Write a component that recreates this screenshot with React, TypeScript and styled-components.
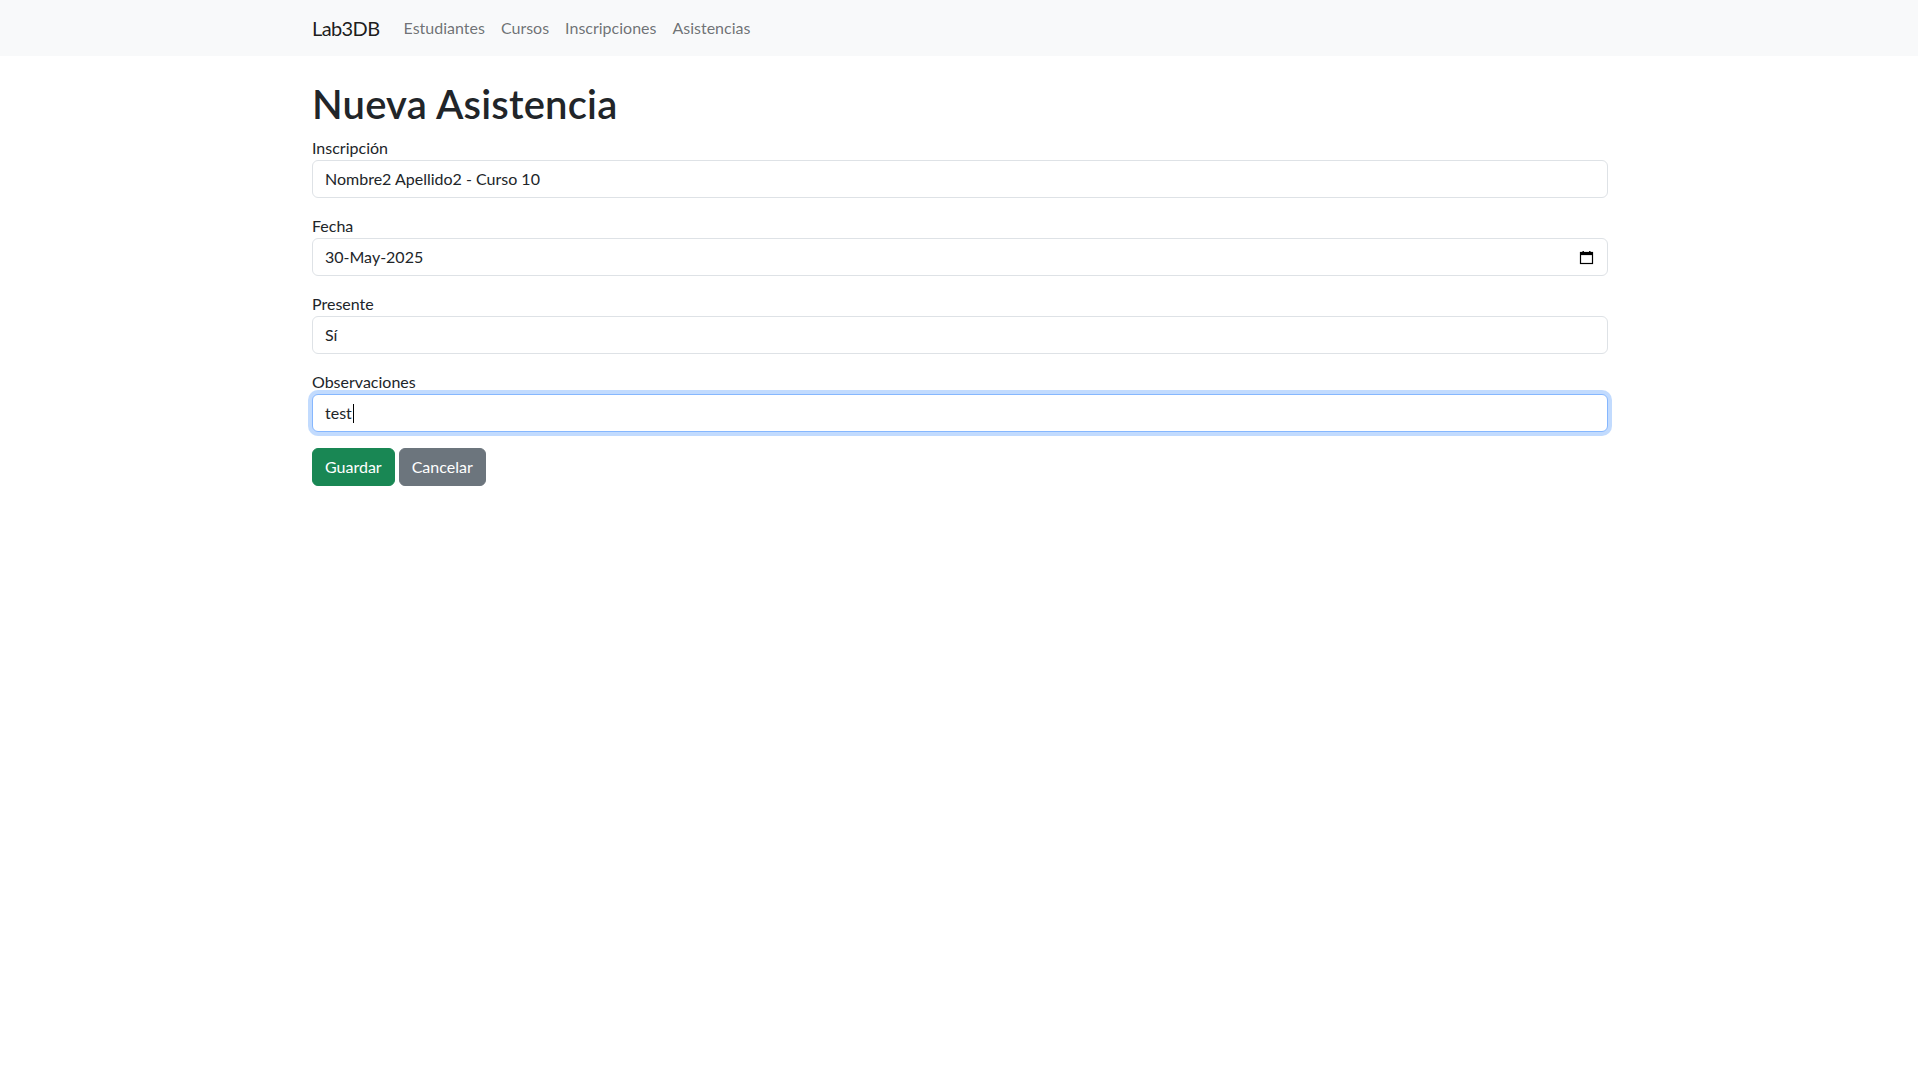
import React from 'react';
import styled, { createGlobalStyle } from 'styled-components';

const FONT = `"Segoe UI", Lato, "Liberation Sans", sans-serif`;

const GlobalStyle = createGlobalStyle`
  *, *::before, *::after { box-sizing: border-box; }
  body {
    margin: 0;
    font-family: ${FONT};
    font-size: 16px;
    line-height: 1.5;
    color: #212529;
    background: #fff;
  }
`;

const Navbar = styled.nav`
  background: #f8f9fa;
  padding: 8px 0;
`;

const Container = styled.div`
  max-width: 1320px;
  margin: 0 auto;
  padding: 0 11px 0 13px;
`;

const NavInner = styled(Container)`
  display: flex;
  align-items: center;
`;

const Brand = styled.a`
  font-size: 20px;
  line-height: 30px;
  padding: 5px 0;
  margin-right: 16px;
  letter-spacing: -0.6px;
  color: rgba(0, 0, 0, 0.9);
  text-decoration: none;
`;

const NavList = styled.div`
  display: flex;
`;

const NavLink = styled.a`
  padding: 8px;
  color: rgba(33, 37, 41, 0.65);
  text-decoration: none;
`;

const Title = styled.h1`
  margin: 24px 0 8px;
  font-size: 40px;
  font-weight: 600;
  line-height: 1.2;
  letter-spacing: 0.2px;
`;

const Group = styled.div`
  margin-bottom: 16px;
`;

const Label = styled.label`
  display: block;
`;

const Field = styled.div<{ $focused?: boolean }>`
  display: flex;
  align-items: center;
  width: 100%;
  height: 38px;
  padding: 6px 12px;
  border: 1px solid ${(p) => (p.$focused ? '#86b7fe' : '#dee2e6')};
  border-radius: 6px;
  background: #fff;
  box-shadow: ${(p) => (p.$focused ? '0 0 0 4px rgba(13, 110, 253, 0.25)' : 'none')};
`;

const FieldInput = styled.input`
  flex: 1;
  min-width: 0;
  border: 0;
  outline: none;
  padding: 0;
  font: inherit;
  color: #212529;
  background: transparent;
`;

const TypedValue = styled.span`
  color: #212529;
`;

const Caret = styled.span`
  display: inline-block;
  width: 1px;
  height: 19px;
  margin-left: 1px;
  background: #000;
`;

const CalendarIcon = styled.svg`
  flex: none;
  width: 15px;
  height: 15px;
  margin-right: 1px;
`;

const Actions = styled.div`
  display: flex;
  gap: 4px;
`;

const Button = styled.button<{ $variant: 'success' | 'secondary' }>`
  padding: 6px 12px;
  font-family: ${FONT};
  font-size: 16px;
  line-height: 1.5;
  color: #fff;
  border-radius: 6px;
  border: 1px solid ${(p) => (p.$variant === 'success' ? '#198754' : '#6c757d')};
  background: ${(p) => (p.$variant === 'success' ? '#198754' : '#6c757d')};
  cursor: pointer;
`;

export default function App() {
  return (
    <>
      <GlobalStyle />
      <Navbar>
        <NavInner>
          <Brand href="#">Lab3DB</Brand>
          <NavList>
            <NavLink href="#">Estudiantes</NavLink>
            <NavLink href="#">Cursos</NavLink>
            <NavLink href="#">Inscripciones</NavLink>
            <NavLink href="#">Asistencias</NavLink>
          </NavList>
        </NavInner>
      </Navbar>
      <Container>
        <Title>Nueva Asistencia</Title>
        <form onSubmit={(e) => e.preventDefault()}>
          <Group>
            <Label>Inscripción</Label>
            <Field>
              <FieldInput readOnly value="Nombre2 Apellido2 - Curso 10" />
            </Field>
          </Group>
          <Group>
            <Label>Fecha</Label>
            <Field>
              <FieldInput readOnly value="30-May-2025" />
              <CalendarIcon viewBox="0 0 15 15">
                <rect x="1.5" y="2.5" width="12" height="11" fill="none" stroke="#000" strokeWidth="1.2" />
                <rect x="1.5" y="2.5" width="12" height="2.6" fill="#000" />
                <rect x="3.5" y="1" width="1.4" height="2" fill="#000" />
                <rect x="10.1" y="1" width="1.4" height="2" fill="#000" />
              </CalendarIcon>
            </Field>
          </Group>
          <Group>
            <Label>Presente</Label>
            <Field>
              <FieldInput readOnly value="Sí" />
            </Field>
          </Group>
          <Group>
            <Label>Observaciones</Label>
            <Field $focused>
              <TypedValue>test</TypedValue>
              <Caret />
            </Field>
          </Group>
          <Actions>
            <Button $variant="success" type="submit">Guardar</Button>
            <Button $variant="secondary" type="button">Cancelar</Button>
          </Actions>
        </form>
      </Container>
    </>
  );
}
